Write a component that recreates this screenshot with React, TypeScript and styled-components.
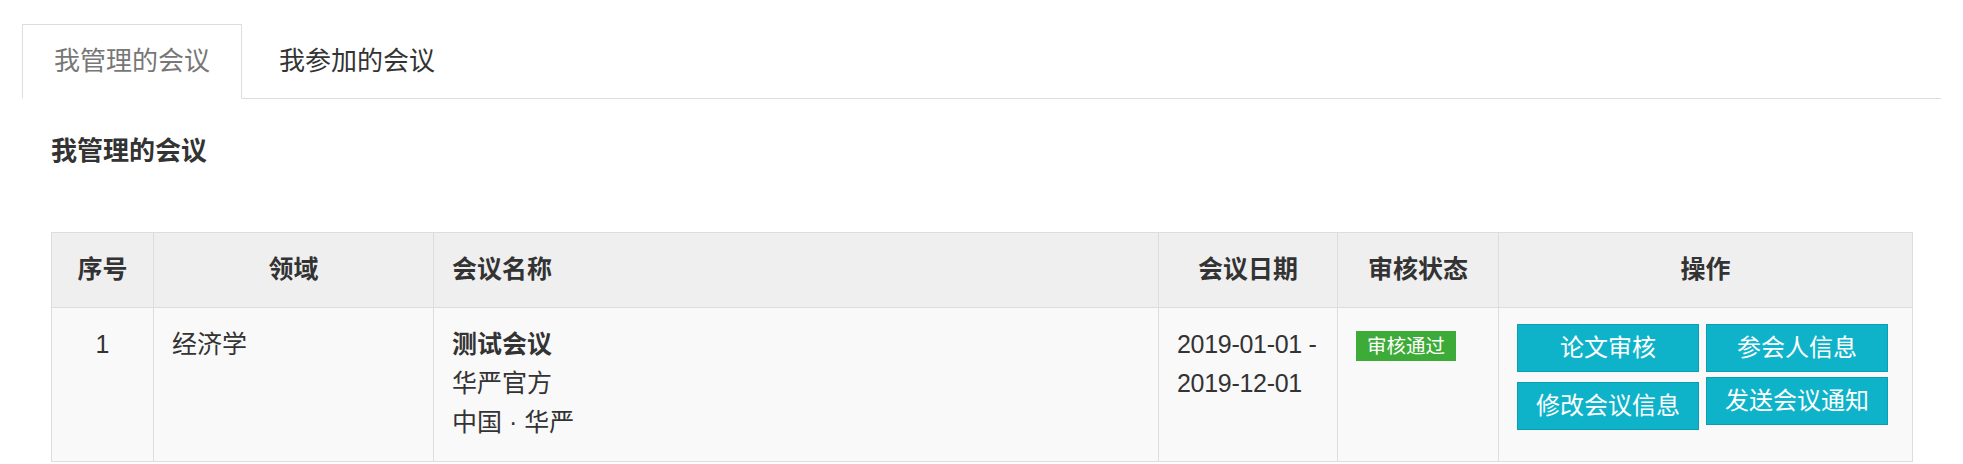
import styled, { createGlobalStyle } from "styled-components";

const GlobalStyle = createGlobalStyle`
  body {
    margin: 0;
    background: #fff;
    color: #333;
    font-family: "Liberation Sans", "Noto Sans CJK SC", sans-serif;
  }
`;

const Page = styled.div`
  padding: 24px 22px 0 22px;
`;

// tab strip, bootstrap nav-tabs style
const TabList = styled.ul`
  display: flex;
  margin: 0;
  padding: 0;
  list-style: none;
  border-bottom: 1px solid #ddd;
`;

const Tab = styled.li<{ $active?: boolean }>`
  margin-bottom: -1px;
  margin-right: 5px;
  padding: 0 31px;
  height: 73px;
  line-height: 73px;
  font-size: 26px;
  border: 1px solid ${(p) => (p.$active ? "#ddd" : "transparent")};
  border-bottom-color: ${(p) => (p.$active ? "#fff" : "transparent")};
  background: ${(p) => (p.$active ? "#fff" : "transparent")};
  color: ${(p) => (p.$active ? "#777" : "#333")};
  cursor: pointer;
`;

const Panel = styled.div`
  padding: 0 29px;
`;

const Heading = styled.h3`
  margin: 33px 0 62px 0;
  font-size: 26px;
  line-height: 38px;
  font-weight: bold;
  color: #333;
`;

const Table = styled.table`
  width: 100%;
  table-layout: fixed;
  border-collapse: collapse;
  border: 1px solid #ddd;
  font-size: 25px;
`;

const Th = styled.th<{ $align?: string }>`
  padding: 17px 18px 18px 18px;
  line-height: 39px;
  text-align: ${(p) => p.$align || "center"};
  font-weight: bold;
  background: #efefef;
  border: 1px solid #ddd;
  color: #333;
`;

const Td = styled.td<{ $align?: string }>`
  padding: 17px 18px 19px 18px;
  line-height: 39px;
  vertical-align: top;
  text-align: ${(p) => p.$align || "left"};
  background: #f9f9f9;
  border: 1px solid #ddd;
  color: #333;
`;

const Title = styled.div`
  font-weight: bold;
`;

const DateLine = styled.div`
  white-space: nowrap;
  letter-spacing: -0.3px;
`;

const Badge = styled.span`
  display: inline-block;
  padding: 0 11px;
  height: 30px;
  line-height: 30px;
  font-size: 19.5px;
  color: #fff;
  background: #3dab38;
  vertical-align: middle;
`;

const Actions = styled.div`
  display: flex;
  flex-wrap: wrap;
  align-items: flex-start;
  column-gap: 7px;
  margin-top: -1px;
`;

const ActionButton = styled.button<{ $offset?: number }>`
  width: 182px;
  height: 48px;
  margin-top: ${(p) => p.$offset || 0}px;
  padding: 0;
  border: 1px solid #0b9eb1;
  background: #0fb3c9;
  color: #fff;
  font-family: "Liberation Sans", "Noto Sans CJK SC", sans-serif;
  font-size: 24px;
  line-height: 46px;
  text-align: center;
  cursor: pointer;
`;

const rows = [
  {
    id: 1,
    field: "经济学",
    name: "测试会议",
    org: "华严官方",
    place: "中国 · 华严",
    start: "2019-01-01",
    end: "2019-12-01",
    status: "审核通过",
  },
];

const App = () => {
  return (
    <Page>
      <GlobalStyle />
      <TabList>
        <Tab $active>我管理的会议</Tab>
        <Tab>我参加的会议</Tab>
      </TabList>
      <Panel>
        <Heading>我管理的会议</Heading>
        <Table>
          <colgroup>
            <col style={{ width: 102 }} />
            <col style={{ width: 280 }} />
            <col style={{ width: 725 }} />
            <col style={{ width: 179 }} />
            <col style={{ width: 161 }} />
            <col style={{ width: 414 }} />
          </colgroup>
          <thead>
            <tr>
              <Th>序号</Th>
              <Th>领域</Th>
              <Th $align="left">会议名称</Th>
              <Th>会议日期</Th>
              <Th>审核状态</Th>
              <Th>操作</Th>
            </tr>
          </thead>
          <tbody>
            {rows.map((r) => (
              <tr key={r.id}>
                <Td $align="center">{r.id}</Td>
                <Td>{r.field}</Td>
                <Td>
                  <Title>{r.name}</Title>
                  <div>{r.org}</div>
                  <div>{r.place}</div>
                </Td>
                <Td>
                  <DateLine>{r.start} -</DateLine>
                  <DateLine>{r.end}</DateLine>
                </Td>
                <Td>
                  <Badge>{r.status}</Badge>
                </Td>
                <Td>
                  <Actions>
                    <ActionButton>论文审核</ActionButton>
                    <ActionButton>参会人信息</ActionButton>
                    <ActionButton $offset={10}>修改会议信息</ActionButton>
                    <ActionButton $offset={5}>发送会议通知</ActionButton>
                  </Actions>
                </Td>
              </tr>
            ))}
          </tbody>
        </Table>
      </Panel>
    </Page>
  );
};

export default App;
